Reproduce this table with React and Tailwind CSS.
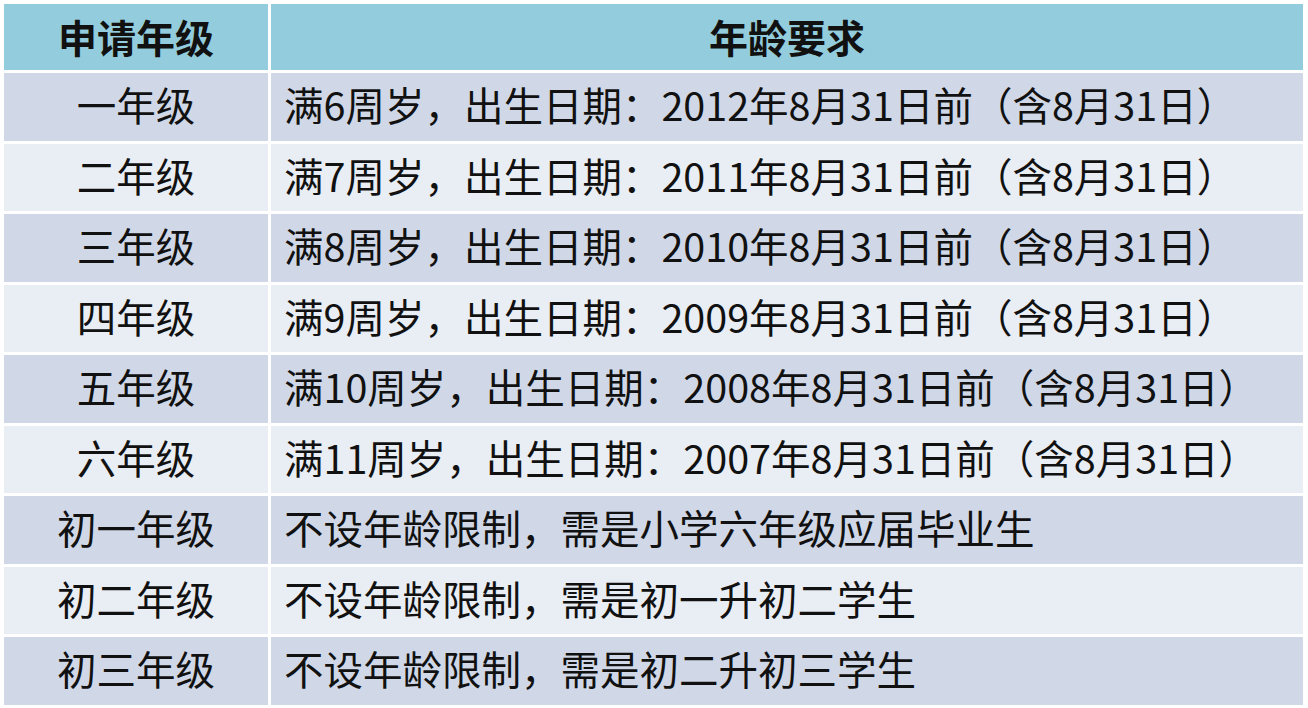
import React from 'react';

const rows = [
    ['一年级', '满6周岁，出生日期：2012年8月31日前（含8月31日）'],
    ['二年级', '满7周岁，出生日期：2011年8月31日前（含8月31日）'],
    ['三年级', '满8周岁，出生日期：2010年8月31日前（含8月31日）'],
    ['四年级', '满9周岁，出生日期：2009年8月31日前（含8月31日）'],
    ['五年级', '满10周岁，出生日期：2008年8月31日前（含8月31日）'],
    ['六年级', '满11周岁，出生日期：2007年8月31日前（含8月31日）'],
    ['初一年级', '不设年龄限制，需是小学六年级应届毕业生'],
    ['初二年级', '不设年龄限制，需是初一升初二学生'],
    ['初三年级', '不设年龄限制，需是初二升初三学生'],
];

const App = () => {
    return (
        <div className="w-[1308px] h-[708px] bg-white pt-[4px] pl-[4px] overflow-hidden text-[#111] text-[39.5px] leading-none font-['Noto_Sans_CJK_SC','Noto_Sans',sans-serif]">
            <div className="w-[1299px] grid grid-cols-[264px_1fr] gap-x-[3px] gap-y-[3px]">
                {/* Header */}
                <div className="h-[66px] pb-[2px] bg-[#93cddd] flex items-center justify-center font-bold text-[39px]">申请年级</div>
                <div className="h-[66px] pb-[2px] bg-[#93cddd] flex items-center justify-center font-bold text-[39px]">年龄要求</div>

                {rows.map(([grade, req], i) => {
                    const bg = i % 2 === 0 ? 'bg-[#d0d8e8]' : 'bg-[#e9edf4]';
                    return (
                        <React.Fragment key={grade}>
                            <div className={`h-[67.5px] pb-[6px] ${bg} flex items-center justify-center`}>{grade}</div>
                            <div className={`h-[67.5px] pb-[6px] ${bg} flex items-center pl-[13px] whitespace-nowrap`}>{req}</div>
                        </React.Fragment>
                    );
                })}
            </div>
        </div>
    );
};

export default App;
